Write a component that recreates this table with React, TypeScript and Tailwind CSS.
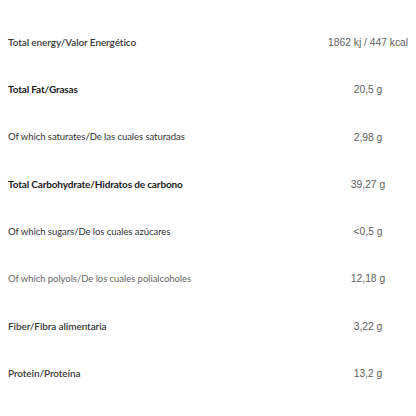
import React from 'react';

const rows = [
  { label: 'Total energy/Valor Energético', value: '1862 kj / 447 kcal', kind: 'semi' },
  { label: 'Total Fat/Grasas', value: '20,5 g', kind: 'bold' },
  { label: 'Of which saturates/De las cuales saturadas', value: '2,98 g', kind: 'normal' },
  { label: 'Total Carbohydrate/Hidratos de carbono', value: '39,27 g', kind: 'bold' },
  { label: 'Of which sugars/De los cuales azúcares', value: '<0,5 g', kind: 'normal' },
  { label: 'Of which polyols/De los cuales polialcoholes', value: '12,18 g', kind: 'light' },
  { label: 'Fiber/Fibra alimentaria', value: '3,22 g', kind: 'semi' },
  { label: 'Protein/Proteína', value: '13,2 g', kind: 'semi' },
];

const labelClass: Record<string, string> = {
  bold: 'text-[10px] font-bold tracking-[-0.15px] text-[#1a1a1a]',
  semi: 'text-[10px] font-semibold tracking-[-0.1px] text-[#3a3a3a]',
  normal: 'text-[9.5px] font-normal tracking-[-0.05px] text-[#333333]',
  light: 'text-[9.5px] font-normal tracking-[-0.05px] text-[#666666]',
};

export default function App() {
  return (
    <div className="w-[416px] h-[416px] bg-white pt-[19px]">
      {rows.map((r, i) => (
        <div key={i} className="flex items-center h-[47.3px] pl-2 pr-2">
          <span className={`font-['Lato',sans-serif] ${labelClass[r.kind]}`}>{r.label}</span>
          <span className="ml-auto w-[80px] text-center text-[10.3px] text-[#5e5e5e] font-['Liberation_Sans',Arial,sans-serif] whitespace-nowrap">
            {r.value}
          </span>
        </div>
      ))}
    </div>
  );
}
